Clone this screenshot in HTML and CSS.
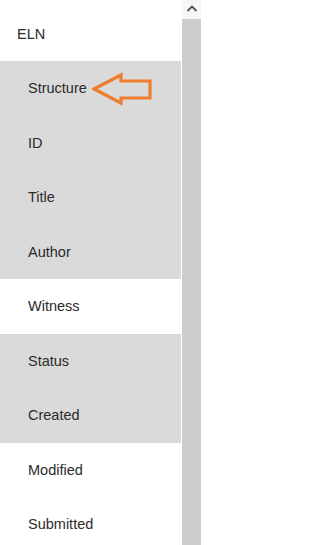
FILE: index.html
```html
<!DOCTYPE html>
<html>
<head>
<meta charset="utf-8">
<link rel="stylesheet" href="styles.css">
</head>
<body>
<div class="frame">
  <ul class="list">
    <li class="row top">ELN</li>
    <li class="row sub shaded structure">Structure
      <svg class="pointer" width="64" height="36" viewBox="0 0 64 36">
        <polygon points="2,17 29,3 29,9 58,9 58,26 29,26 29,31" fill="none" stroke="#ee7d2f" stroke-width="3.2" stroke-linejoin="miter"/>
      </svg>
    </li>
    <li class="row sub shaded">ID</li>
    <li class="row sub shaded">Title</li>
    <li class="row sub shaded">Author</li>
    <li class="row sub">Witness</li>
    <li class="row sub shaded">Status</li>
    <li class="row sub shaded">Created</li>
    <li class="row sub">Modified</li>
    <li class="row sub">Submitted</li>
  </ul>
  <div class="scrollbar">
    <div class="scroll-up">
      <svg width="12" height="8" viewBox="0 0 12 8"><polyline points="1.5,7 6,2.5 10.5,7" fill="none" stroke="#505050" stroke-width="1.8"/></svg>
    </div>
    <div class="thumb"></div>
  </div>
</div>
</body>
</html>
```
FILE: styles.css
```css
html, body {
  margin: 0;
  padding: 0;
  background: #ffffff;
}
.frame {
  width: 202px;
  height: 545px;
  overflow: hidden;
  display: flex;
  font-family: "Liberation Sans", Arial, sans-serif;
  font-size: 14.5px;
  color: #2b2b2b;
}
.list {
  list-style: none;
  margin: 0;
  padding: 0;
  width: 181px;
  flex: none;
}
.row {
  height: 54.5px;
  display: flex;
  align-items: center;
  box-sizing: border-box;
}
.row.top {
  height: 61px;
  padding-left: 17px;
  padding-top: 6px;
}
.row.sub {
  padding-left: 28px;
}
.row.shaded {
  background: #dadada;
}
.structure {
  position: relative;
}
.pointer {
  position: absolute;
  left: 92px;
  top: 11px;
}
.scrollbar {
  margin-left: 1px;
  width: 19px;
  display: flex;
  flex-direction: column;
  flex: none;
}
.scroll-up {
  height: 19px;
  display: flex;
  justify-content: center;
  align-items: center;
  padding-bottom: 4px;
  box-sizing: border-box;
  background: #f7f7f7;
}
.thumb {
  flex: 1;
  background: #cdcdcd;
}
```
